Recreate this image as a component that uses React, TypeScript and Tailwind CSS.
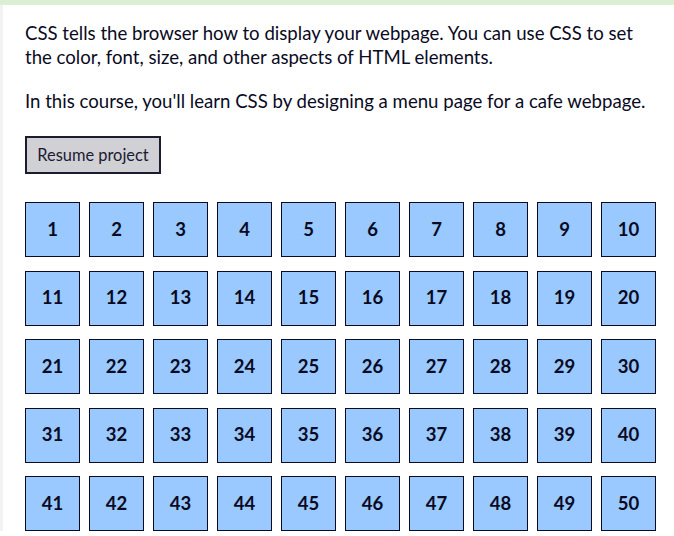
const cells = Array.from({ length: 50 }, (_, i) => i + 1);

export default function App() {
  return (
    <div className="min-h-screen bg-white text-[#0a0a23] font-['Lato',_'Open_Sans',_sans-serif]">
      <div className="h-[5px] bg-[#dcefd5]" />
      <div className="flex">
        <div className="w-[3px] shrink-0 bg-[#f2f2f2]" />
        <main className="flex-1 pl-[22px] pr-[14px] pt-[16px]">
          <p className="text-[18.6px] leading-[24px] mb-[20px]">
            CSS tells the browser how to display your webpage. You can use CSS to set the color, font, size, and other aspects of HTML elements.
          </p>
          <p className="text-[18.6px] leading-[24px]">
            In this course, you'll learn CSS by designing a menu page for a cafe webpage.
          </p>
          <button className="mt-[23px] h-[38px] w-[136px] border-2 border-[#1b1b32] bg-[#d0d0d5] text-[16.4px] text-[#1b1b32]">
            Resume project
          </button>
          <div className="mt-[28px] grid grid-cols-[repeat(10,55px)] gap-x-[9px] gap-y-[13.5px]">
            {cells.map((n) => (
              <div
                key={n}
                className="h-[55px] flex items-center justify-center border border-[#0a0a23] bg-[#99c9ff] text-[18.5px] font-bold"
              >
                {n}
              </div>
            ))}
          </div>
        </main>
      </div>
    </div>
  );
}
